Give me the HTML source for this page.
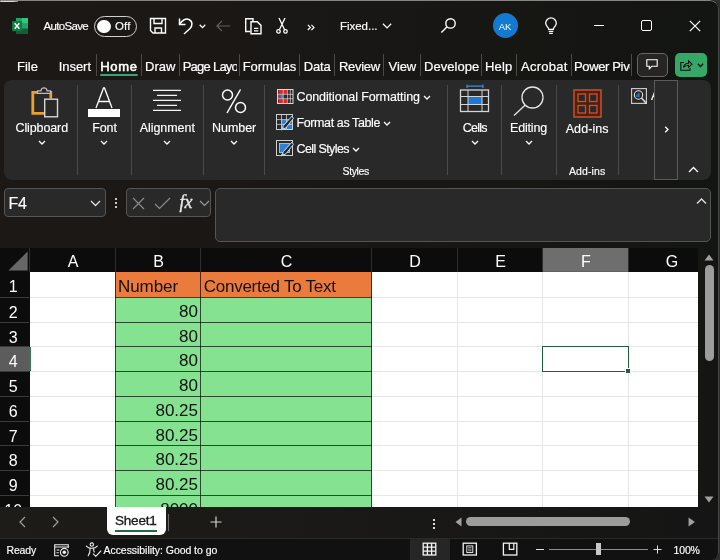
<!DOCTYPE html>
<html>
<head>
<meta charset="utf-8">
<title>Excel</title>
<style>
*{box-sizing:border-box;margin:0;padding:0}
html,body{width:720px;height:560px;overflow:hidden;background:#2e2e2e}
body{font-family:"Liberation Sans",sans-serif;color:#fff;position:relative;font-size:13px}
.abs{position:absolute}
#win{will-change:transform;position:absolute;left:0;top:0;width:718.500px;height:560px;background:linear-gradient(90deg,#1c1816 0%,#191715 50%,#131512 100%);border-radius:2px 9px 8px 0;overflow:hidden}
#winb{position:absolute;left:0;top:0;width:718.500px;height:560px;border-top:1.800px solid #858585;border-right:1px solid #474747;border-radius:2px 9px 8px 0;pointer-events:none;z-index:5}
.t{-webkit-text-stroke:0.15px;position:absolute;white-space:nowrap;line-height:1}
.tab{-webkit-text-stroke:0.2px #fff;position:absolute;top:58.5px;font-size:13px;color:#fff;white-space:nowrap;line-height:16px;letter-spacing:-0.2px}
.sep{position:absolute;top:53.500px;width:1px;height:22.500px;background:#4c4a48}
#ribbon{position:absolute;left:4px;top:80px;width:706.500px;height:99.700px;background:#292929;border-radius:8px}
.gsep{position:absolute;top:85px;width:1px;height:90px;background:#4a4a4a}
.glabel{-webkit-text-stroke:0.15px #fff;position:absolute;font-size:12.5px;color:#fff;white-space:nowrap;line-height:15px;text-align:center;letter-spacing:-0.2px}
.small{font-size:10.5px}
.ch{position:absolute;top:248px;height:24px;background:#0c0c0c;color:#fff;font-size:16px;text-align:center;line-height:27px}
.rh{position:absolute;left:0;width:29px;padding-right:2.500px;background:#0c0c0c;color:#fff;font-size:16px;text-align:center;line-height:30px;height:24px;overflow:hidden}
.cell{position:absolute;font-size:17px;color:#111;line-height:25px;white-space:nowrap}
.hl{position:absolute;left:30px;width:669px;height:1px;background:#e6e6e6}
.vl{position:absolute;top:272px;width:1px;height:235px;background:#e6e6e6}
</style>
</head>
<body>
<div id="win">
<div id="winb"></div>
<div class="abs" style="left:0;top:0;width:18px;height:2px;background:linear-gradient(90deg,#dcdcdc 70%,#858585)"></div>
<!-- TITLE BAR -->
<div id="titlebar" class="abs" style="left:0;top:0;width:720px;height:50px">
  <svg class="abs" style="left:11px;top:17px" width="18" height="18" viewBox="0 0 18 18">
    <rect x="5" y="1" width="12" height="16" rx="1.2" fill="#21a366"/>
    <rect x="11" y="1" width="6" height="5.3" fill="#33c481"/>
    <rect x="5" y="1" width="6" height="5.3" fill="#21a366"/>
    <rect x="5" y="6.3" width="6" height="5.3" fill="#107c41"/>
    <rect x="11" y="6.3" width="6" height="5.3" fill="#21a366"/>
    <rect x="5" y="11.6" width="12" height="5.4" fill="#185c37"/>
    <rect x="1" y="4" width="10" height="10" rx="1" fill="#107c41"/>
    <path d="M3.6 6.3 L8.4 11.7 M8.4 6.3 L3.6 11.7" stroke="#fff" stroke-width="1.5"/>
  </svg>
  <div class="t" id="x_auto" style="left:43.5px;top:21px;font-size:11.5px;letter-spacing:-0.67px">AutoSave</div>
  <div class="abs" style="left:93.5px;top:16px;width:43.5px;height:20.5px;border:1.5px solid #d0d0d0;border-radius:11px"></div>
  <div class="abs" style="left:97px;top:19.5px;width:13.5px;height:13.5px;border-radius:50%;background:#fff"></div>
  <div class="t" id="x_off" style="left:115.0px;top:21px;font-size:11.5px;letter-spacing:0.12px">Off</div>
  <!-- save -->
  <svg class="abs" style="left:148.5px;top:16px" width="18" height="19" viewBox="0 0 18 19" fill="none" stroke="#fff" stroke-width="1.4">
    <path d="M1.500 2.500 H16.500 V17 H4 L1.500 14.500 Z"/>
    <path d="M5 2.500 V7.500 H13 V2.500"/>
    <path d="M6 17 V12 H12.500 V17"/>
  </svg>
  <!-- undo -->
  <svg class="abs" style="left:177px;top:15px" width="20" height="20" viewBox="0 0 20 20" fill="none" stroke="#fff" stroke-width="1.5">
    <path d="M2.5 3.5 v6 h6"/>
    <path d="M2.8 9.2 C5 5 9 3 12 4.5 C16 6.5 15.5 11 13 13.5 L7 19"/>
  </svg>
  <svg class="abs" style="left:199px;top:23.5px" width="7" height="5" viewBox="0 0 7 5" fill="none" stroke="#fff" stroke-width="1.3"><path d="M0.7 0.8 L3.5 3.6 L6.3 0.8"/></svg>
  <!-- back arrow dim -->
  <svg class="abs" style="left:215px;top:19px" width="17" height="14" viewBox="0 0 18 14" fill="none" stroke="#606060" stroke-width="1.250"><path d="M16 7 H2 M7.500 1.500 L2 7 L7.500 12.500"/></svg>
  <!-- paste/copy -->
  <svg class="abs" style="left:243.5px;top:16px" width="20" height="20" viewBox="0 0 20 20" fill="none" stroke="#fff" stroke-width="1.4">
    <path d="M6.500 15.500 H1.700 V2.700 H9 V5.500"/>
    <path d="M7 5.700 H13.300 L17 9.400 V17.700 H7 Z"/>
    <path d="M10 12.300 H14.300 M10 14.800 H14.300" stroke-width="1.200"/>
  </svg>
  <!-- scissors -->
  <svg class="abs" style="left:275px;top:17px" width="14" height="18" viewBox="0 0 14 18" fill="none" stroke="#fff" stroke-width="1.3">
    <path d="M4 1 L9.600 12.800 M10 1 L4.400 12.800"/>
    <circle cx="3.500" cy="14.400" r="1.750"/><circle cx="10.500" cy="14.400" r="1.750"/>
  </svg>
  <svg class="abs" style="left:306.500px;top:23.500px" width="8" height="7" viewBox="0 0 8 7" fill="none" stroke="#fff" stroke-width="1.200"><path d="M0.800 0.800 L3.400 3.400 L0.800 6 M4.400 0.800 L7 3.400 L4.400 6"/></svg>
  <div class="t" id="x_fixed" style="left:340.0px;top:21px;font-size:11.5px;letter-spacing:-0.03px">Fixed...</div>
  <svg class="abs" style="left:381.5px;top:23px" width="11" height="7" viewBox="0 0 12 8" fill="none" stroke="#fff" stroke-width="1.4"><path d="M0.800 0.800 L5.500 5.500 L10.200 0.800"/></svg>
  <!-- search -->
  <svg class="abs" style="left:440px;top:16px" width="18" height="18" viewBox="0 0 18 18" fill="none" stroke="#fff" stroke-width="1.4"><circle cx="10.5" cy="7.4" r="4.7"/><path d="M7.1 10.8 L1.4 16.6"/></svg>
  <div class="abs" style="left:492.500px;top:13px;width:25px;height:25px;border-radius:50%;background:#1479d2;font-size:9.500px;text-align:center;line-height:27.500px;color:#fff">AK</div>
  <!-- bulb -->
  <svg class="abs" style="left:544px;top:17.300px" width="14" height="18" viewBox="0 0 14 18" fill="none" stroke="#fff" stroke-width="1.300">
    <path d="M4.700 12.300 C4.700 10.300 1.700 9.300 1.700 6.200 A5.300 5.300 0 0 1 12.300 6.200 C12.300 9.300 9.300 10.300 9.300 12.300 Z"/>
    <path d="M4.700 14.300 H9.300 M5.200 16.400 H8.800"/>
  </svg>
  <div class="abs" style="left:593.500px;top:24.500px;width:10.500px;height:1.200px;background:#fff"></div>
  <div class="abs" style="left:641px;top:20.300px;width:11px;height:11px;border:1.300px solid #fff;border-radius:2px"></div>
  <svg class="abs" style="left:688.700px;top:20.200px" width="12" height="12" viewBox="0 0 12 12" fill="none" stroke="#fff" stroke-width="1.200"><path d="M0.800 0.800 L11.200 11.200 M11.200 0.800 L0.800 11.200"/></svg>
</div>

<!-- TAB ROW -->
<div id="tabs">
  <div class="tab" id="t_file" style="left:17.0px;letter-spacing:0.01px">File</div>
  <div class="tab" id="t_insert" style="left:58.7px;letter-spacing:-0.04px">Insert</div>
  <div class="sep" style="left:96px"></div>
  <div class="tab" id="t_home" style="left:100.3px;letter-spacing:0.65px;-webkit-text-stroke:0.55px #fff">Home</div>
  <div class="abs" style="left:100px;top:74px;width:38px;height:2px;background:#3aa373;border-radius:1px"></div>
  <div class="sep" style="left:141px"></div>
  <div class="tab" id="t_draw" style="left:145.0px;letter-spacing:0.04px">Draw</div>
  <div class="sep" style="left:179px"></div>
  <div class="tab" id="t_page" style="left:182.7px;width:54.5px;overflow:hidden;letter-spacing:-0.75px">Page Layout</div>
  <div class="sep" style="left:239px"></div>
  <div class="tab" id="t_form" style="left:242.7px;letter-spacing:-0.07px">Formulas</div>
  <div class="sep" style="left:299px"></div>
  <div class="tab" id="t_data" style="left:303.7px;letter-spacing:-0.17px">Data</div>
  <div class="sep" style="left:334px"></div>
  <div class="tab" id="t_review" style="left:339.0px;letter-spacing:-0.32px">Review</div>
  <div class="sep" style="left:383px"></div>
  <div class="tab" id="t_view" style="left:388.5px;letter-spacing:-0.06px">View</div>
  <div class="sep" style="left:420px"></div>
  <div class="tab" id="t_dev" style="left:424px;width:55px;overflow:hidden;letter-spacing:0.05px">Developer</div>
  <div class="sep" style="left:481px"></div>
  <div class="tab" id="t_help" style="left:485.0px;letter-spacing:0.19px">Help</div>
  <div class="sep" style="left:516px"></div>
  <div class="tab" id="t_acro" style="left:521.0px;letter-spacing:0.24px">Acrobat</div>
  <div class="sep" style="left:571px"></div>
  <div class="tab" id="t_pp" style="left:574px;width:55.5px;overflow:hidden;letter-spacing:-0.36px">Power Pivot</div>
  <div class="sep" style="left:631px"></div>
  <div class="abs" style="left:636.500px;top:53px;width:31px;height:23.500px;border:1px solid #666;border-radius:5px;background:#262524"></div>
  <svg class="abs" style="left:646px;top:59px" width="12" height="11" viewBox="0 0 12 11" fill="none" stroke="#fff" stroke-width="1.100"><path d="M0.800 0.800 H11.200 V7.300 H5.800 L3.300 9.800 V7.300 H0.800 Z"/></svg>
  <div class="abs" style="left:675px;top:53px;width:32px;height:23.500px;border-radius:5px;background:#35a867"></div>
  <svg class="abs" style="left:680px;top:59px" width="13" height="12" viewBox="0 0 13 12" fill="none" stroke="#111" stroke-width="1.100"><path d="M4 3.500 H0.800 V11.200 H10 V9"/><path d="M3.500 8.500 C4 5.700 6.300 4.300 8.500 4.300 V1.800 L12 5.200 L8.500 8.300 V6.200 C6.300 6.200 4.700 7 3.500 8.500 Z"/></svg>
  <svg class="abs" style="left:696.500px;top:63px" width="7" height="5" viewBox="0 0 7 5" fill="none" stroke="#111" stroke-width="1.3"><path d="M0.800 0.800 L3.500 3.500 L6.200 0.800"/></svg>
</div>

<!-- RIBBON -->
<div id="ribbon">
  <!-- coordinates inside ribbon are page coords minus (4,80) ; use wrapper offset -->
  <div class="abs" style="left:-4px;top:-80px;width:0;height:0">
  <div class="gsep" style="left:77px"></div>
  <div class="gsep" style="left:131px"></div>
  <div class="gsep" style="left:203px"></div>
  <div class="gsep" style="left:264px"></div>
  <div class="gsep" style="left:447px"></div>
  <div class="gsep" style="left:501px"></div>
  <div class="gsep" style="left:556px"></div>
  <div class="gsep" style="left:618px"></div>

  <!-- Clipboard -->
  <svg class="abs" style="left:30px;top:85px" width="30" height="34" viewBox="0 0 30 34" fill="none">
    <path d="M9 7.300 H2.800 V28.400 H14" stroke="#eaa02e" stroke-width="2.800"/>
    <path d="M19 7.300 H20.800 V13.500" stroke="#eaa02e" stroke-width="2.800"/>
    <path d="M7.500 8.300 V5.800 H11 C11 1.800 17 1.800 17 5.800 H20.500 V8.300 Z" stroke="#bdbdbd" stroke-width="1.200" fill="#292929"/>
    <rect x="14.700" y="14.200" width="12.800" height="17.600" stroke="#d6d6d6" stroke-width="1.400" fill="#292929"/>
  </svg>
  <div class="glabel" id="l_clip" style="left:15.5px;top:121px;letter-spacing:-0.11px">Clipboard</div>
  <svg class="abs chev" style="left:38px;top:140px" width="8" height="6" viewBox="0 0 8 6" fill="none" stroke="#fff" stroke-width="1.300"><path d="M1 1 L4 4 L7 1"/></svg>

  <!-- Font -->
  <svg class="abs" style="left:87px;top:86px" width="34" height="32" viewBox="0 0 34 32" fill="none">
    <path d="M9 22 L16.500 2 H17.500 L25 22 M11.500 15.500 H22.500" stroke="#fff" stroke-width="1.300"/>
    <rect x="1" y="23" width="32" height="8" fill="#fff"/>
  </svg>
  <div class="glabel" id="l_font" style="left:92.3px;top:121px;letter-spacing:-0.13px">Font</div>
  <svg class="abs chev" style="left:100px;top:140px" width="8" height="6" viewBox="0 0 8 6" fill="none" stroke="#fff" stroke-width="1.300"><path d="M1 1 L4 4 L7 1"/></svg>

  <!-- Alignment -->
  <svg class="abs" style="left:152px;top:88px" width="30" height="24" viewBox="0 0 30 24" fill="none" stroke="#f4f4f4" stroke-width="1.300">
    <path d="M1 2.300 H29 M5 7.300 H25 M1 12.300 H29 M5 17.300 H25 M1 22.300 H29"/>
  </svg>
  <div class="glabel" id="l_align" style="left:139.7px;top:121px;letter-spacing:-0.05px">Alignment</div>
  <svg class="abs chev" style="left:163px;top:140px" width="8" height="6" viewBox="0 0 8 6" fill="none" stroke="#fff" stroke-width="1.300"><path d="M1 1 L4 4 L7 1"/></svg>

  <!-- Number -->
  <svg class="abs" style="left:219.500px;top:87.600px" width="28" height="26" viewBox="0 0 28 26" fill="none" stroke="#fff" stroke-width="1.500">
    <circle cx="7.500" cy="7" r="5"/><circle cx="20.500" cy="19.500" r="5"/><path d="M20.500 1.500 L7 25"/>
  </svg>
  <div class="glabel" id="l_num" style="left:212.0px;top:121px;letter-spacing:-0.04px">Number</div>
  <svg class="abs chev" style="left:230px;top:140px" width="8" height="6" viewBox="0 0 8 6" fill="none" stroke="#fff" stroke-width="1.300"><path d="M1 1 L4 4 L7 1"/></svg>

  <!-- Styles -->
  <svg class="abs" style="left:276.500px;top:88.500px" width="17" height="15" viewBox="0 0 17 15" fill="none">
    <rect x="0.500" y="0.500" width="15.500" height="14" fill="#292929" stroke="#d8d8d8"/>
    <rect x="1.500" y="1" width="8.500" height="4.300" fill="#e02626"/>
    <rect x="1" y="5.300" width="2.200" height="4.400" fill="#e02626"/>
    <rect x="3.200" y="5.300" width="3" height="4.400" fill="#2f7fd6"/>
    <rect x="1.500" y="9.700" width="8.500" height="4.300" fill="#e02626"/>
    <path d="M6.200 1 V14 M10.600 1 V14 M13.300 1 V14 M1 5.300 H16 M1 9.700 H16" stroke="#d8d8d8" stroke-width="0.700"/>
  </svg>
  <div class="glabel" id="l_cf" style="left:296.5px;top:90px;letter-spacing:-0.11px">Conditional Formatting</div>
  <svg class="abs chev" style="left:423px;top:95px" width="8" height="6" viewBox="0 0 8 6" fill="none" stroke="#fff" stroke-width="1.300"><path d="M1 1 L4 4 L7 1"/></svg>

  <svg class="abs" style="left:276px;top:114px" width="18" height="17" viewBox="0 0 18 17" fill="none">
    <rect x="0.500" y="0.500" width="16" height="15" fill="#292929" stroke="#d0d0d0"/>
    <rect x="5.500" y="5.600" width="10.500" height="9.400" fill="#2f7fd6"/>
    <path d="M5.500 1 V15 M10.500 1 V15 M1 5.600 H16 M1 10.400 H16" stroke="#d0d0d0" stroke-width="0.800"/>
    <path d="M15.800 2.300 L7.500 11.500 L5 16 L10 13.800 L17.500 4.300 Z" fill="#292929" stroke="#bfe0f7" stroke-width="1"/><path d="M5 16 L6.500 12.800 L8.800 14.500 Z" fill="#9fd3f5"/>
  </svg>
  <div class="glabel" id="l_fat" style="left:296.5px;top:116px;letter-spacing:-0.39px">Format as Table</div>
  <svg class="abs chev" style="left:383px;top:121px" width="8" height="6" viewBox="0 0 8 6" fill="none" stroke="#fff" stroke-width="1.300"><path d="M1 1 L4 4 L7 1"/></svg>

  <svg class="abs" style="left:276px;top:140px" width="18" height="17" viewBox="0 0 18 17" fill="none">
    <rect x="0.500" y="0.500" width="16" height="15" fill="#292929" stroke="#d0d0d0"/>
    <rect x="3.500" y="3.500" width="10" height="9" fill="#2f7fd6" stroke="#d0d0d0" stroke-width="0.800"/>
    <path d="M15.800 2.300 L7.500 11.500 L5 16 L10 13.800 L17.500 4.300 Z" fill="#292929" stroke="#bfe0f7" stroke-width="1"/><path d="M5 16 L6.500 12.800 L8.800 14.500 Z" fill="#9fd3f5"/>
  </svg>
  <div class="glabel" id="l_cs" style="left:296.5px;top:142px;letter-spacing:-0.60px">Cell Styles</div>
  <svg class="abs chev" style="left:352px;top:147px" width="8" height="6" viewBox="0 0 8 6" fill="none" stroke="#fff" stroke-width="1.300"><path d="M1 1 L4 4 L7 1"/></svg>
  <div class="glabel small" id="l_styles" style="left:342.5px;top:163.5px;letter-spacing:-0.35px">Styles</div>

  <!-- Cells -->
  <svg class="abs" style="left:459px;top:84px" width="32" height="29" viewBox="0 0 32 29" fill="none">
    <path d="M8 0.500 V4 M24 0.500 V4 M8 2.200 H24" stroke="#3a8ee0" stroke-width="1.200"/>
    <rect x="1.500" y="6" width="28" height="21.500" stroke="#d6d6d6" stroke-width="1.300"/>
    <rect x="9" y="12.500" width="14" height="8" fill="#1e78d8"/>
    <path d="M9 6 V27.500 M23 6 V27.500 M1.500 12.500 H29.500 M1.500 20.500 H29.500" stroke="#d6d6d6" stroke-width="1"/>
  </svg>
  <div class="glabel" id="l_cells" style="left:462.7px;top:121px;letter-spacing:-0.74px">Cells</div>
  <svg class="abs chev" style="left:471px;top:140px" width="8" height="6" viewBox="0 0 8 6" fill="none" stroke="#fff" stroke-width="1.300"><path d="M1 1 L4 4 L7 1"/></svg>

  <!-- Editing -->
  <svg class="abs" style="left:512px;top:85px" width="33" height="32" viewBox="0 0 33 32" fill="none" stroke="#e6e6e6" stroke-width="1.300">
    <circle cx="20.500" cy="12.500" r="10.500"/><path d="M13 20.300 L2 30.500"/>
  </svg>
  <div class="glabel" id="l_edit" style="left:510.0px;top:121px;letter-spacing:-0.18px">Editing</div>
  <svg class="abs chev" style="left:525px;top:140px" width="8" height="6" viewBox="0 0 8 6" fill="none" stroke="#fff" stroke-width="1.300"><path d="M1 1 L4 4 L7 1"/></svg>

  <!-- Add-ins -->
  <svg class="abs" style="left:573px;top:88.500px" width="29" height="29" viewBox="0 0 29 29" fill="none">
    <rect x="1" y="1" width="27" height="27" fill="#4f1f10" stroke="#cb4f28" stroke-width="1.500"/>
    <rect x="5" y="5" width="7.500" height="7.500" fill="#292929" stroke="#cf5129" stroke-width="1.300"/>
    <rect x="16.500" y="5" width="7.500" height="7.500" fill="#292929" stroke="#cf5129" stroke-width="1.300"/>
    <rect x="5" y="16.500" width="7.500" height="7.500" fill="#292929" stroke="#cf5129" stroke-width="1.300"/>
    <rect x="16.500" y="16.500" width="7.500" height="7.500" fill="#292929" stroke="#cf5129" stroke-width="1.300"/>
  </svg>
  <div class="glabel" id="l_addins" style="left:565.7px;top:122px;letter-spacing:0.09px">Add-ins</div>
  <div class="glabel small" id="l_addins2" style="left:569.0px;top:163.5px;letter-spacing:0.10px">Add-ins</div>

  <!-- Analyze -->
  <svg class="abs" style="left:631px;top:88px" width="17" height="17" viewBox="0 0 17 17" fill="none">
    <rect x="0.600" y="0.600" width="14.800" height="14.800" stroke="#d0d0d0" stroke-width="1.100"/>
    <circle cx="7.500" cy="7" r="4.200" stroke="#e6e6e6" stroke-width="1.100"/>
    <path d="M10.500 10 L15.500 15.500" stroke="#e6e6e6" stroke-width="1.400"/>
    <path d="M6 9 V6.500 M7.800 9 V5" stroke="#3a8ee0" stroke-width="1.200"/>
  </svg>
  <div class="glabel" style="left:651px;top:89px;width:4px;overflow:hidden;text-align:left">A</div>
  <div class="abs" style="left:654px;top:80px;width:24px;height:100px;border:1px solid #5b5b5b;background:#292929"></div>
  <svg class="abs" style="left:663.500px;top:126px" width="6" height="7" viewBox="0 0 6 7" fill="none" stroke="#fff" stroke-width="1.300"><path d="M1.200 0.800 L4 3.500 L1.200 6.200"/></svg>
  <svg class="abs" style="left:688px;top:166px" width="11" height="7" viewBox="0 0 11 7" fill="none" stroke="#fff" stroke-width="1.300"><path d="M1 6 L5.500 1.500 L10 6"/></svg>
  </div>
</div>

<!-- FORMULA BAR -->
<div id="fbar">
  <div class="abs" style="left:4px;top:188px;width:102px;height:28.500px;border:1px solid #555;border-radius:4px;background:#292929"></div>
  <div class="t" id="f_name" style="left:8.500px;top:196px;font-size:16px;letter-spacing:-0.3px">F4</div>
  <svg class="abs" style="left:90px;top:200px" width="11" height="7" viewBox="0 0 11 7" fill="none" stroke="#e0e0e0" stroke-width="1.300"><path d="M1 1 L5.500 5.500 L10 1"/></svg>
  <div class="abs" style="left:115px;top:198px;width:2px;height:2px;background:#c8c8c8"></div>
  <div class="abs" style="left:115px;top:202px;width:2px;height:2px;background:#c8c8c8"></div>
  <div class="abs" style="left:115px;top:206px;width:2px;height:2px;background:#c8c8c8"></div>
  <div class="abs" style="left:125.500px;top:188px;width:85.500px;height:28.500px;border:1px solid #555;border-radius:4px;background:#292929"></div>
  <svg class="abs" style="left:132px;top:197px" width="13" height="13" viewBox="0 0 13 13" fill="none" stroke="#8a8a8a" stroke-width="1.200"><path d="M1 1 L12 12 M12 1 L1 12"/></svg>
  <svg class="abs" style="left:154px;top:197px" width="17" height="13" viewBox="0 0 17 13" fill="none" stroke="#8a8a8a" stroke-width="1.200"><path d="M1 7 L5.500 11.500 L16 1"/></svg>
  <div class="t" id="f_fx" style="left:179.500px;top:192.500px;font-size:18px;font-family:'Liberation Serif',serif;font-style:italic;-webkit-text-stroke:0.35px #e8e8e8;color:#e8e8e8">fx</div>
  <svg class="abs" style="left:199px;top:200px" width="11" height="7" viewBox="0 0 11 7" fill="none" stroke="#9a9a9a" stroke-width="1.200"><path d="M1 1 L5.500 5.500 L10 1"/></svg>
  <div class="abs" style="left:215px;top:188px;width:496px;height:53.500px;border:1px solid #555;border-radius:5px;background:#292929"></div>
  <svg class="abs" style="left:696px;top:197px" width="11" height="8" viewBox="0 0 11 8" fill="none" stroke="#e0e0e0" stroke-width="1.300"><path d="M1 6.500 L5.500 2 L10 6.500"/></svg>
</div>

<!-- GRID -->
<div id="grid">
  <div class="abs" style="left:0;top:248px;width:698px;height:259px;background:#0c0c0c"></div>
  <div class="abs" style="left:30px;top:272px;width:668px;height:235px;background:#fff"></div>
  <svg class="abs" style="left:8px;top:251px" width="20" height="20" viewBox="0 0 20 20"><path d="M19.600 0.500 V19.600 H0.400 Z" fill="#676767"/></svg>
  <div class="ch" style="left:30px;width:86px;background:#0c0c0c">A</div>
  <div class="ch" style="left:116px;width:85px;background:#0c0c0c">B</div>
  <div class="ch" style="left:201px;width:171px;background:#0c0c0c">C</div>
  <div class="ch" style="left:372px;width:86px;background:#0c0c0c">D</div>
  <div class="ch" style="left:458px;width:85px;background:#0c0c0c">E</div>
  <div class="ch" style="left:543px;width:86px;background:#6e6e6e">F</div>
  <div class="ch" style="left:629px;width:86px;background:#0c0c0c">G</div>
  <div class="abs" style="left:543px;top:270.500px;width:86px;height:1.500px;background:#2f7d57"></div>
  <div class="abs" style="left:115px;top:248px;width:1px;height:24px;background:#2e2e2e"></div>
  <div class="abs" style="left:200px;top:248px;width:1px;height:24px;background:#2e2e2e"></div>
  <div class="abs" style="left:371px;top:248px;width:1px;height:24px;background:#2e2e2e"></div>
  <div class="abs" style="left:457px;top:248px;width:1px;height:24px;background:#2e2e2e"></div>
  <div class="abs" style="left:542px;top:248px;width:1px;height:24px;background:#2e2e2e"></div>
  <div class="abs" style="left:628px;top:248px;width:1px;height:24px;background:#2e2e2e"></div>
  <div class="abs" style="left:29px;top:248px;width:1px;height:24px;background:#2e2e2e"></div>
  <div class="hl" style="top:297px"></div>
  <div class="hl" style="top:322px"></div>
  <div class="hl" style="top:346px"></div>
  <div class="hl" style="top:371px"></div>
  <div class="hl" style="top:396px"></div>
  <div class="hl" style="top:421px"></div>
  <div class="hl" style="top:445px"></div>
  <div class="hl" style="top:470px"></div>
  <div class="hl" style="top:495px"></div>
  <div class="vl" style="left:115px"></div>
  <div class="vl" style="left:200px"></div>
  <div class="vl" style="left:371px"></div>
  <div class="vl" style="left:457px"></div>
  <div class="vl" style="left:542px"></div>
  <div class="vl" style="left:628px"></div>
  <div class="rh" style="top:272px;height:25px;background:#0c0c0c">1</div>
  <div class="abs" style="left:0;top:297px;width:29px;height:1px;background:#3a3a3a"></div>
  <div class="rh" style="top:298px;height:24px;background:#0c0c0c">2</div>
  <div class="abs" style="left:0;top:322px;width:29px;height:1px;background:#3a3a3a"></div>
  <div class="rh" style="top:323px;height:23px;background:#0c0c0c">3</div>
  <div class="abs" style="left:0;top:346px;width:29px;height:1px;background:#3a3a3a"></div>
  <div class="rh" style="top:347px;height:24px;background:#5c5c5c">4</div>
  <div class="abs" style="left:0;top:371px;width:29px;height:1px;background:#3a3a3a"></div>
  <div class="rh" style="top:372px;height:24px;background:#0c0c0c">5</div>
  <div class="abs" style="left:0;top:396px;width:29px;height:1px;background:#3a3a3a"></div>
  <div class="rh" style="top:397px;height:24px;background:#0c0c0c">6</div>
  <div class="abs" style="left:0;top:421px;width:29px;height:1px;background:#3a3a3a"></div>
  <div class="rh" style="top:422px;height:23px;background:#0c0c0c">7</div>
  <div class="abs" style="left:0;top:445px;width:29px;height:1px;background:#3a3a3a"></div>
  <div class="rh" style="top:446px;height:24px;background:#0c0c0c">8</div>
  <div class="abs" style="left:0;top:470px;width:29px;height:1px;background:#3a3a3a"></div>
  <div class="rh" style="top:471px;height:24px;background:#0c0c0c">9</div>
  <div class="abs" style="left:0;top:495px;width:29px;height:1px;background:#3a3a3a"></div>
  <div class="rh" style="top:496px;height:24px;background:#0c0c0c">10</div>
  <div class="abs" style="left:29px;top:347px;width:1.500px;height:24px;background:#2f7d57"></div>
  <div class="abs" style="left:115px;top:272px;width:257px;height:25px;background:#ea7b3c"></div>
  <div class="abs" style="left:115px;top:297px;width:257px;height:210px;background:#84e291"></div>
  <div class="abs" style="left:115px;top:297px;width:257px;height:1px;background:rgba(0,0,0,0.68)"></div>
  <div class="abs" style="left:115px;top:322px;width:257px;height:1px;background:rgba(0,0,0,0.68)"></div>
  <div class="abs" style="left:115px;top:346px;width:257px;height:1px;background:rgba(0,0,0,0.68)"></div>
  <div class="abs" style="left:115px;top:371px;width:257px;height:1px;background:rgba(0,0,0,0.68)"></div>
  <div class="abs" style="left:115px;top:396px;width:257px;height:1px;background:rgba(0,0,0,0.68)"></div>
  <div class="abs" style="left:115px;top:421px;width:257px;height:1px;background:rgba(0,0,0,0.68)"></div>
  <div class="abs" style="left:115px;top:445px;width:257px;height:1px;background:rgba(0,0,0,0.68)"></div>
  <div class="abs" style="left:115px;top:470px;width:257px;height:1px;background:rgba(0,0,0,0.68)"></div>
  <div class="abs" style="left:115px;top:495px;width:257px;height:1px;background:rgba(0,0,0,0.68)"></div>
  <div class="abs" style="left:115px;top:272px;width:1px;height:235px;background:rgba(0,0,0,0.68)"></div>
  <div class="abs" style="left:200px;top:272px;width:1px;height:235px;background:rgba(0,0,0,0.68)"></div>
  <div class="abs" style="left:371px;top:272px;width:1px;height:235px;background:rgba(0,0,0,0.68)"></div>
  <div class="cell" id="c_b1" style="left:118px;top:274px;letter-spacing:-0.08px">Number</div>
  <div class="cell" id="c_c1" style="left:203.800px;top:274px;letter-spacing:-0.27px">Converted To Text</div>
  <div class="cell" style="left:116px;width:82px;text-align:right;top:299px">80</div>
  <div class="cell" style="left:116px;width:82px;text-align:right;top:324px">80</div>
  <div class="cell" style="left:116px;width:82px;text-align:right;top:348px">80</div>
  <div class="cell" style="left:116px;width:82px;text-align:right;top:373px">80</div>
  <div class="cell" style="left:116px;width:82px;text-align:right;top:398px">80.25</div>
  <div class="cell" style="left:116px;width:82px;text-align:right;top:423px">80.25</div>
  <div class="cell" style="left:116px;width:82px;text-align:right;top:447px">80.25</div>
  <div class="cell" style="left:116px;width:82px;text-align:right;top:472px">80.25</div>
  <div class="cell" style="left:116px;width:82px;text-align:right;top:497px">8000</div>
  <div class="abs" style="left:541.700px;top:346px;width:87.500px;height:26px;border:1.600px solid #215f3e;background:#fff"></div>
  <div class="abs" style="left:625px;top:368px;width:6px;height:6px;background:#215f3e;border:1px solid #fff"></div>
  <div class="abs" style="left:698px;top:248px;width:22px;height:259px;background:linear-gradient(90deg,#161614,#131512)"></div>
  <svg class="abs" style="left:704px;top:254px" width="10" height="7" viewBox="0 0 10 7"><path d="M5 0.500 L9.500 6.500 H0.500 Z" fill="#a0a0a0"/></svg>
  <div class="abs" style="left:705px;top:265px;width:9px;height:96px;border-radius:4.500px;background:#9c9c9c"></div>
  <svg class="abs" style="left:704px;top:496px" width="10" height="7" viewBox="0 0 10 7"><path d="M5 6.500 L9.500 0.500 H0.500 Z" fill="#a0a0a0"/></svg>
</div>

<!-- SHEET TABS -->
<div id="sheetbar">
  <div class="abs" style="left:0;top:507px;width:720px;height:32px;background:linear-gradient(90deg,#1d1c18 0%,#1a1917 45%,#141514 100%)"></div>
  <svg class="abs" style="left:19px;top:516px" width="7" height="12" viewBox="0 0 7 12" fill="none" stroke="#9a9a9a" stroke-width="1.300"><path d="M6 1 L1 6 L6 11"/></svg>
  <svg class="abs" style="left:52px;top:516px" width="7" height="12" viewBox="0 0 7 12" fill="none" stroke="#9a9a9a" stroke-width="1.300"><path d="M1 1 L6 6 L1 11"/></svg>
  <div class="abs" style="left:107px;top:507px;width:58.500px;height:28px;background:#fff;border-radius:0 0 6px 6px"></div>
  <div class="t" id="s_sheet" style="left:115px;top:514px;font-size:13.500px;color:#1a1a1a;letter-spacing:-0.2px;-webkit-text-stroke:0.350px #1a1a1a">Sheet1</div>
  <div class="abs" style="left:115px;top:530px;width:42px;height:2px;background:#1e6b45"></div>
  <div class="abs" style="left:168px;top:514px;width:1px;height:17px;background:#6a6a6a"></div>
  <svg class="abs" style="left:210px;top:516px" width="12" height="12" viewBox="0 0 12 12" fill="none" stroke="#d0d0d0" stroke-width="1.200"><path d="M6 0.500 V11.500 M0.500 6 H11.500"/></svg>
  <div class="abs" style="left:432.500px;top:518.5px;width:2.300px;height:2.300px;background:#dcdcdc"></div>
  <div class="abs" style="left:432.500px;top:522.5px;width:2.300px;height:2.300px;background:#dcdcdc"></div>
  <div class="abs" style="left:432.500px;top:526.5px;width:2.300px;height:2.300px;background:#dcdcdc"></div>
  <svg class="abs" style="left:455px;top:517px" width="7" height="10" viewBox="0 0 7 10"><path d="M0.500 5 L6.500 0.500 V9.500 Z" fill="#a0a0a0"/></svg>
  <div class="abs" style="left:466px;top:517px;width:164px;height:9px;border-radius:4.500px;background:#9c9c9c"></div>
  <svg class="abs" style="left:688px;top:517px" width="7.500" height="10" viewBox="0 0 7 10" preserveAspectRatio="none"><path d="M6.500 5 L0.500 0.500 V9.500 Z" fill="#a0a0a0"/></svg>
</div>

<!-- STATUS -->
<div id="status">
  <div class="abs" style="left:0;top:538px;width:720px;height:22px;background:#111;border-top:1px solid #2a2a28"></div>
  <div class="t" id="st_ready" style="left:6.500px;top:545px;font-size:10.500px;letter-spacing:-0.15px">Ready</div>
  <svg class="abs" style="left:54px;top:544px" width="16" height="13" viewBox="0 0 16 13" fill="none" stroke="#ececec" stroke-width="1.100"><path d="M5 11.800 H0.700 V0.700 H14.300 V4 M0.700 3 H14.300 M2.500 6 H5.500 M2.500 8.800 H4.800"/><circle cx="10.300" cy="8.300" r="3.900"/><circle cx="10.300" cy="8.300" r="1.800" fill="#ececec" stroke="none"/></svg>
  <svg class="abs" style="left:85px;top:542px" width="17" height="16" viewBox="0 0 17 16" fill="none" stroke="#ececec" stroke-width="1.100" stroke-linecap="round" stroke-linejoin="round"><circle cx="6.800" cy="2.600" r="1.700"/><path d="M1.300 4.200 C3 6.200 5 6.300 6.800 6.300 C8.600 6.300 10.600 6.200 12.300 4.200 M5 6.500 C5.300 9.500 4.500 12 3.200 13.800 M8.600 6.500 C8.600 8 8.800 9.200 9.300 10"/><path d="M8.300 11.800 L10.800 14.300 L15.800 9"/></svg>
  <div class="t" id="st_acc" style="left:103.500px;top:545px;font-size:10.500px;letter-spacing:-0.05px">Accessibility: Good to go</div>
  <div class="abs" style="left:410px;top:539px;width:40px;height:21px;background:#262626"></div>
  <svg class="abs" style="left:422px;top:542px" width="15" height="14" viewBox="0 0 15 14" fill="none" stroke="#f4f4f4" stroke-width="1.300"><rect x="1.200" y="1.200" width="12.600" height="11.800"/><path d="M5.400 1.200 V13 M9.600 1.200 V13 M1.200 5.100 H13.800 M1.200 9.100 H13.800"/></svg>
  <svg class="abs" style="left:462px;top:542px" width="16" height="14" viewBox="0 0 16 14" fill="none" stroke="#f4f4f4" stroke-width="1.300"><rect x="1.200" y="1.200" width="13.200" height="11.800"/><rect x="4.800" y="3.900" width="6" height="6.600" stroke-width="0.900"/><path d="M6 5.600 H9.600 M6 7.200 H9.600 M6 8.800 H9.600" stroke-width="0.600"/></svg>
  <svg class="abs" style="left:502px;top:542px" width="16" height="14" viewBox="0 0 16 14" fill="none" stroke="#f4f4f4" stroke-width="1.300"><rect x="1.400" y="1.200" width="13.400" height="11.800"/><path d="M7.300 1.200 V7.300 H11.800 V1.200" stroke-width="1.200"/></svg>
  <div class="abs" style="left:536px;top:549px;width:8px;height:1px;background:#e0e0e0"></div>
  <div class="abs" style="left:549px;top:549px;width:99px;height:1px;background:#8c8c8c"></div>
  <div class="abs" style="left:596px;top:543px;width:5px;height:12px;background:#c8c8c8"></div>
  <svg class="abs" style="left:652.500px;top:545px" width="9" height="9" viewBox="0 0 9 9" fill="none" stroke="#e0e0e0" stroke-width="1"><path d="M4.500 0.500 V8.500 M0.500 4.500 H8.500"/></svg>
  <div class="t" id="st_zoom" style="left:673.500px;top:545px;font-size:10.500px;letter-spacing:-0.15px">100%</div>
</div>
</div>
</body>
</html>
